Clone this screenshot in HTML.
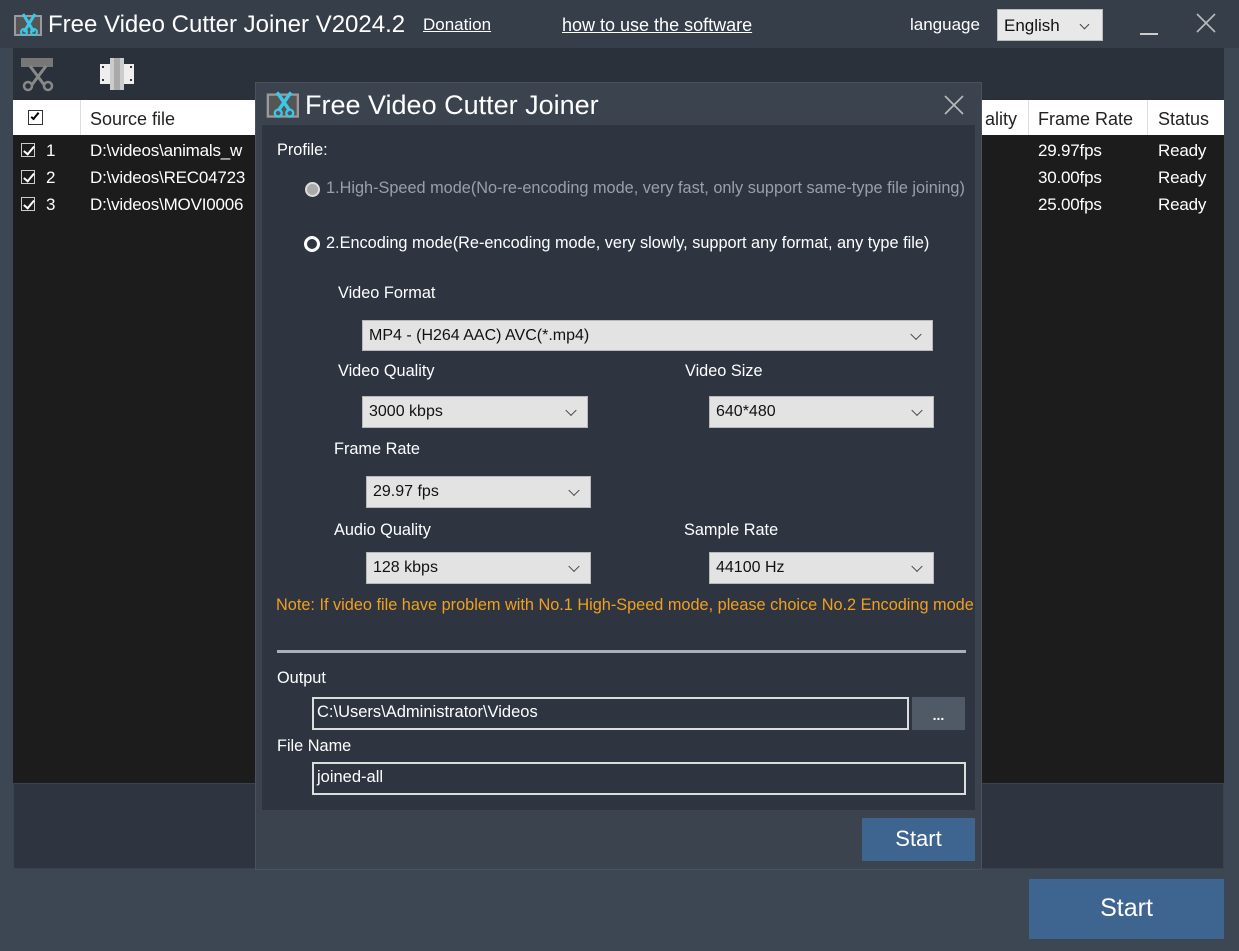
<!DOCTYPE html>
<html><head><meta charset="utf-8"><style>
*{margin:0;padding:0;box-sizing:border-box}
body{width:1239px;height:951px;background:#3d4754;font-family:"Liberation Sans",sans-serif;color:#fff;position:relative;overflow:hidden}
.a{position:absolute;white-space:nowrap}
.sel{position:absolute;background:#e3e3e3;border:1px solid #b8b8b8;color:#111;font-size:16px;padding-left:6px;display:flex;align-items:center}
.sel:after{content:"";position:absolute;right:12px;top:50%;width:7px;height:7px;border-right:1.3px solid #444;border-bottom:1.3px solid #444;transform:translateY(-70%) rotate(45deg)}
.lbl{position:absolute;font-size:16.3px;color:#fff;white-space:nowrap}
.cb{position:absolute;width:14px;height:14px;border:1px solid #ccc;background:#1c1c1c}
.cb:after{content:"";position:absolute;left:4px;top:0px;width:4px;height:9px;border-right:2px solid #fff;border-bottom:2px solid #fff;transform:rotate(40deg)}
.row{position:absolute;font-size:17px;color:#fff;letter-spacing:-0.2px}
</style></head><body>
<div class="a" style="left:0;top:0;width:1239px;height:48px;background:#363e4a"></div>
<svg class="a" style="left:14px;top:12px" width="30" height="26" viewBox="0 0 30 26"><rect x="0" y="3" width="28" height="21" fill="#9a9a9a"/><rect x="2" y="5" width="24" height="17" fill="#555"/><path d="M9 2 L20 20 M21 2 L10 20" stroke="#3cc7e8" stroke-width="3"/><circle cx="10" cy="20" r="3" fill="none" stroke="#3cc7e8" stroke-width="2"/><circle cx="20" cy="20" r="3" fill="none" stroke="#3cc7e8" stroke-width="2"/></svg>
<div class="a" style="left:48px;top:11px;font-size:24px;color:#fff">Free Video Cutter Joiner V2024.2</div>
<div class="a" style="left:423px;top:15px;font-size:17px;text-decoration:underline">Donation</div>
<div class="a" style="left:562px;top:15px;font-size:18px;text-decoration:underline">how to use the software</div>
<div class="a" style="left:910px;top:15px;font-size:17px">language</div>
<div class="a" style="left:997px;top:9px;width:106px;height:32px;background:#e8e8e8;border:1px solid #bbb;color:#111;font-size:17px;padding:6px 6px">English<span style="position:absolute;right:14px;top:11px;width:7px;height:7px;border-right:1.3px solid #444;border-bottom:1.3px solid #444;transform:rotate(45deg)"></span></div>
<div class="a" style="left:1140px;top:33px;width:18px;height:2px;background:#ccc"></div>
<svg class="a" style="left:1196px;top:13px" width="20" height="20"><path d="M1 1L19 19M19 1L1 19" stroke="#bbb" stroke-width="1.6"/></svg>
<div class="a" style="left:13px;top:48px;width:1211px;height:52px;background:#2a313b"></div>
<svg class="a" style="left:20px;top:56px" width="36" height="36"><rect x="1" y="2" width="32" height="9" fill="#777"/><path d="M8 34 L26 10 M28 34 L10 10" stroke="#888" stroke-width="3"/><circle cx="8" cy="30" r="4" fill="#2a313b" stroke="#888" stroke-width="2.5"/><circle cx="28" cy="30" r="4" fill="#2a313b" stroke="#888" stroke-width="2.5"/></svg>
<svg class="a" style="left:99px;top:57px" width="36" height="34"><rect x="1" y="7" width="10" height="20" fill="#eee"/><rect x="25" y="7" width="10" height="20" fill="#eee"/><rect x="11" y="1" width="14" height="32" fill="#ccc"/><rect x="15" y="1" width="6" height="32" fill="#aaa"/><g fill="#333"><rect x="3" y="9" width="2" height="2"/><rect x="3" y="22" width="2" height="2"/><rect x="31" y="9" width="2" height="2"/><rect x="31" y="22" width="2" height="2"/></g></svg>
<div class="a" style="left:13px;top:100px;width:1211px;height:35px;background:#fff"></div>
<div class="a" style="left:80px;top:100px;width:1px;height:35px;background:#ddd"></div>
<div class="a" style="left:1028px;top:100px;width:1px;height:35px;background:#ddd"></div>
<div class="a" style="left:1147px;top:100px;width:1px;height:35px;background:#ddd"></div>
<div class="a" style="left:28px;top:110px;width:15px;height:15px;border:1px solid #333;background:#fff"><div style="position:absolute;left:4px;top:0;width:4px;height:9px;border-right:2px solid #000;border-bottom:2px solid #000;transform:rotate(40deg)"></div></div>
<div class="a" style="left:90px;top:109px;font-size:18px;color:#222">Source file</div>
<div class="a" style="left:985px;top:109px;font-size:18px;color:#222">ality</div>
<div class="a" style="left:1038px;top:109px;font-size:18px;color:#222">Frame Rate</div>
<div class="a" style="left:1158px;top:109px;font-size:18px;color:#222">Status</div>
<div class="a" style="left:13px;top:135px;width:1211px;height:648px;background:#1c1c1c"></div>
<div class="cb" style="left:21px;top:143px"></div><div class="row" style="left:46px;top:141px">1</div><div class="row" style="left:90px;top:141px">D:\videos\animals_w</div>
<div class="cb" style="left:21px;top:170px"></div><div class="row" style="left:46px;top:168px">2</div><div class="row" style="left:90px;top:168px">D:\videos\REC04723</div>
<div class="cb" style="left:21px;top:197px"></div><div class="row" style="left:46px;top:195px">3</div><div class="row" style="left:90px;top:195px">D:\videos\MOVI0006</div>
<div class="row" style="left:1038px;top:141px">29.97fps</div><div class="row" style="left:1158px;top:141px">Ready</div>
<div class="row" style="left:1038px;top:168px">30.00fps</div><div class="row" style="left:1158px;top:168px">Ready</div>
<div class="row" style="left:1038px;top:195px">25.00fps</div><div class="row" style="left:1158px;top:195px">Ready</div>
<div class="a" style="left:13px;top:783px;width:1211px;height:86px;background:#2e3540;border:1px solid #3a424e"></div>
<div class="a" style="left:1029px;top:879px;width:195px;height:60px;background:#3e6590;color:#fff;font-size:25px;text-align:center;line-height:58px">Start</div>

<!-- dialog -->
<div class="a" style="left:255px;top:82px;width:727px;height:788px;background:#3a434e;border:1px solid #4a525d"></div>
<svg class="a" style="left:266px;top:90px" width="36" height="30" viewBox="0 0 30 26"><rect x="0" y="3" width="28" height="21" fill="#9a9a9a"/><rect x="2" y="5" width="24" height="17" fill="#555"/><path d="M9 2 L20 18 M21 2 L10 18" stroke="#3cc7e8" stroke-width="3"/><circle cx="10" cy="20" r="3" fill="none" stroke="#3cc7e8" stroke-width="2"/><circle cx="20" cy="20" r="3" fill="none" stroke="#3cc7e8" stroke-width="2"/></svg>
<div class="a" style="left:305px;top:90px;font-size:27px;color:#fff">Free Video Cutter Joiner</div>
<svg class="a" style="left:944px;top:95px" width="20" height="20"><path d="M1 1L19 19M19 1L1 19" stroke="#bbb" stroke-width="1.6"/></svg>
<div class="a" style="left:262px;top:125px;width:713px;height:685px;background:#2e3540"></div>
<div class="lbl" style="left:277px;top:141px">Profile:</div>
<div class="a" style="left:305px;top:182px;width:15px;height:15px;border-radius:50%;background:#aaa;border:2px solid #ddd"></div>
<div class="lbl" style="left:326px;top:179px;color:#9aa0a8">1.High-Speed mode(No-re-encoding mode, very fast, only support same-type file joining)</div>
<div class="a" style="left:304px;top:236px;width:16px;height:16px;border-radius:50%;border:3px solid #fff"></div>
<div class="lbl" style="left:326px;top:234px">2.Encoding mode(Re-encoding mode, very slowly, support any format, any type file)</div>
<div class="lbl" style="left:338px;top:284px">Video Format</div>
<div class="sel" style="left:362px;top:320px;width:571px;height:31px">MP4 - (H264 AAC) AVC(*.mp4)</div>
<div class="lbl" style="left:338px;top:362px">Video Quality</div>
<div class="lbl" style="left:685px;top:362px">Video Size</div>
<div class="sel" style="left:362px;top:396px;width:226px;height:32px">3000 kbps</div>
<div class="sel" style="left:709px;top:396px;width:225px;height:32px">640*480</div>
<div class="lbl" style="left:334px;top:440px">Frame Rate</div>
<div class="sel" style="left:366px;top:476px;width:225px;height:32px">29.97 fps</div>
<div class="lbl" style="left:334px;top:521px">Audio Quality</div>
<div class="lbl" style="left:684px;top:521px">Sample Rate</div>
<div class="sel" style="left:366px;top:552px;width:225px;height:32px">128 kbps</div>
<div class="sel" style="left:709px;top:552px;width:225px;height:32px">44100 Hz</div>
<div class="lbl" style="left:276px;top:596px;color:#f0a020">Note: If video file have problem with No.1 High-Speed mode, please choice No.2 Encoding mode</div>
<div class="a" style="left:277px;top:650px;width:689px;height:3px;background:#aab0b8"></div>
<div class="lbl" style="left:277px;top:669px">Output</div>
<div class="a" style="left:312px;top:697px;width:597px;height:33px;border:2px solid #ddd;background:#2e3540;font-size:16.5px;padding:4px 3px">C:\Users\Administrator\Videos</div>
<div class="a" style="left:912px;top:697px;width:53px;height:33px;background:#505966;font-size:14px;font-weight:bold;text-align:center;line-height:36px">...</div>
<div class="lbl" style="left:277px;top:737px">File Name</div>
<div class="a" style="left:312px;top:762px;width:654px;height:33px;border:2px solid #ddd;background:#2e3540;font-size:16.5px;padding:4px 3px">joined-all</div>
<div class="a" style="left:862px;top:818px;width:113px;height:43px;background:#3e6590;font-size:22px;text-align:center;line-height:42px">Start</div>
</body></html>
